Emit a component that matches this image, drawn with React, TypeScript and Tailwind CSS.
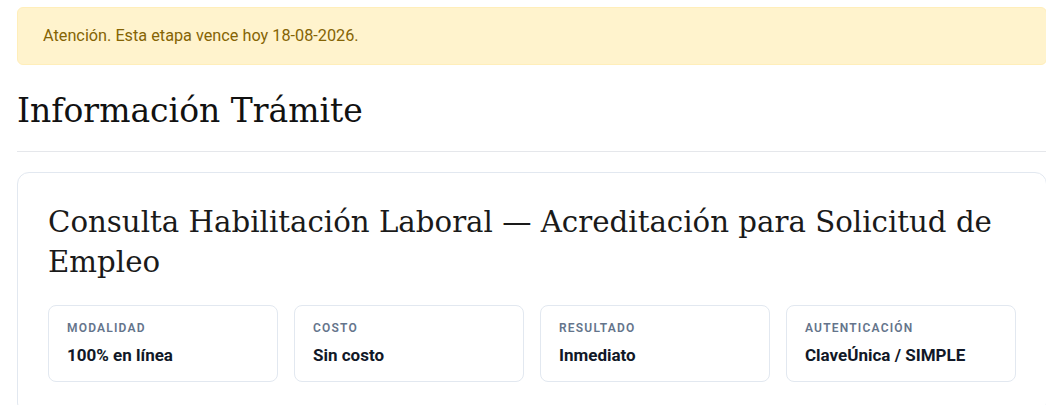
import React from "react";

const stats = [
  { label: "Modalidad", value: "100% en línea" },
  { label: "Costo", value: "Sin costo" },
  { label: "Resultado", value: "Inmediato" },
  { label: "Autenticación", value: "ClaveÚnica / SIMPLE" },
];

const serif = "font-['DejaVu_Serif',serif]";

export default function App() {
  return (
    <div className="w-full overflow-hidden bg-white font-['Roboto',sans-serif]">
      <div className="ml-[17px] w-[1030px] pt-[7px]">
        {/* Aviso de vencimiento */}
        <div className="rounded-md border border-[#ffeeba] bg-[#fff3cd] px-[25px] py-4 text-[16.25px] leading-6 text-[#856404]">
          Atención. Esta etapa vence hoy 18-08-2026.
        </div>

        <h1 className={`${serif} mt-[26px] text-[33px] leading-10 text-[#111]`}>
          Información Trámite
        </h1>
        <hr className="mt-5 border-0 border-t border-[#e5e7eb]" />

        {/* Ficha del trámite */}
        <div className="mt-5 rounded-xl border border-[#e2e8f0] bg-white px-[30px] pt-[29px] pb-8">
          <h2 className={`${serif} text-[29.25px] leading-10 text-[#1a1a1a]`}>
            Consulta Habilitación Laboral — Acreditación para Solicitud de Empleo
          </h2>

          <div className="mt-[23px] grid grid-cols-4 gap-4">
            {stats.map((s) => (
              <div
                key={s.label}
                className="rounded-lg border border-[#e2e8f0] px-[18px] py-[14px]"
              >
                <div className="mb-[7px] text-xs leading-4 font-semibold tracking-[0.1em] text-[#64748b] uppercase">
                  {s.label}
                </div>
                <div className="text-[17px] leading-6 font-bold text-[#111827]">{s.value}</div>
              </div>
            ))}
          </div>
        </div>
      </div>
    </div>
  );
}
